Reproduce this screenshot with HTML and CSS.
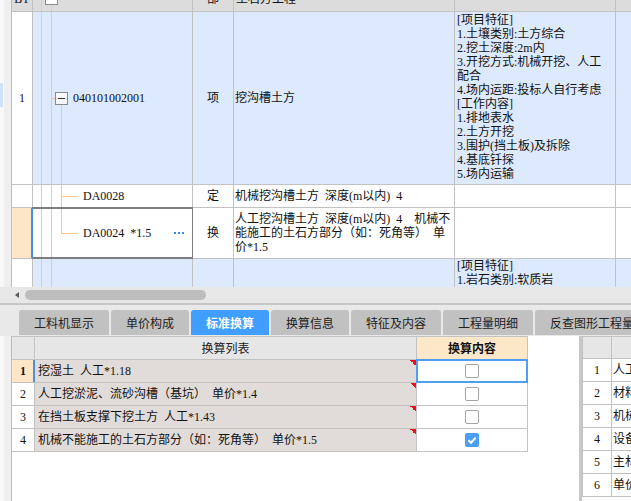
FILE: index.html
```html
<!DOCTYPE html>
<html lang="zh-CN">
<head>
<meta charset="utf-8">
<title>标准换算</title>
<link rel="stylesheet" href="styles.css">
</head>
<body>
<div class="app">
  <section class="upper">
    <div class="strip"><div class="strip-mark"></div></div>
    <div class="bill">
      <div class="c hd hd-c"><span class="cut">BT</span></div>
      <div class="c hd tree"><span class="hd-check"></span></div>
      <div class="c hd hd-c"><span class="cut">部</span></div>
      <div class="c hd hd-name"><span class="cut">土石方工程</span></div>
      <div class="c hd"></div>
      <div class="c hd"></div>

      <div class="c num">1</div>
      <div class="c tree blue t-root"><span class="fold"></span><span>040101002001</span></div>
      <div class="c blue center">项</div>
      <div class="c blue name">挖沟槽土方</div>
      <div class="c blue feat">
        <div>[项目特征]</div>
        <div>1.土壤类别:土方综合</div>
        <div>2.挖土深度:2m内</div>
        <div>3.开挖方式:机械开挖、人工</div>
        <div>配合</div>
        <div>4.场内运距:投标人自行考虑</div>
        <div>[工作内容]</div>
        <div>1.排地表水</div>
        <div>2.土方开挖</div>
        <div>3.围护(挡土板)及拆除</div>
        <div>4.基底钎探</div>
        <div>5.场内运输</div>
      </div>
      <div class="c blue"></div>

      <div class="c num"></div>
      <div class="c tree t-mid"><span>DA0028</span></div>
      <div class="c center">定</div>
      <div class="c name"><div>机械挖沟槽土方 深度(m以内) 4</div></div>
      <div class="c"></div>
      <div class="c"></div>

      <div class="c num cur"></div>
      <div class="c tree t-last sel"><span>DA0024 *1.5</span><span class="more"></span></div>
      <div class="c center">换</div>
      <div class="c name"><div>人工挖沟槽土方 深度(m以内) 4&nbsp; 机械不<br>能施工的土石方部分（如：死角等） 单<br>价*1.5</div></div>
      <div class="c"></div>
      <div class="c"></div>

      <div class="c num"></div>
      <div class="c tree blue"></div>
      <div class="c blue"></div>
      <div class="c blue"></div>
      <div class="c blue feat feat-top">
        <div>[项目特征]</div>
        <div>1.岩石类别:软质岩</div>
        <div>2.开凿深度:2m内</div>
      </div>
      <div class="c blue"></div>
    </div>
  </section>

  <div class="hscroll"><span class="arrow"></span><span class="thumb"></span></div>
  <div class="rule"></div>

  <nav class="tabs">
    <span class="tab">工料机显示</span>
    <span class="tab">单价构成</span>
    <span class="tab on">标准换算</span>
    <span class="tab">换算信息</span>
    <span class="tab">特征及内容</span>
    <span class="tab">工程量明细</span>
    <span class="tab">反查图形工程量</span>
  </nav>

  <section class="lower">
    <div class="strip"></div>
    <div class="calc-wrap">
      <div class="calc">
        <div class="k k-hd"></div>
        <div class="k k-hd">换算列表</div>
        <div class="k k-hd hot">换算内容</div>

        <div class="k k-num cur">1</div>
        <div class="k k-txt">挖湿土 人工*1.18</div>
        <div class="k k-chk sel"><span class="box"></span></div>

        <div class="k k-num">2</div>
        <div class="k k-txt">人工挖淤泥、流砂沟槽（基坑） 单价*1.4</div>
        <div class="k k-chk"><span class="box"></span></div>

        <div class="k k-num">3</div>
        <div class="k k-txt">在挡土板支撑下挖土方 人工*1.43</div>
        <div class="k k-chk"><span class="box"></span></div>

        <div class="k k-num">4</div>
        <div class="k k-txt">机械不能施工的土石方部分（如：死角等） 单价*1.5</div>
        <div class="k k-chk"><span class="box on"><svg width="12" height="12" viewBox="0 0 12 12"><path d="M2.4 6.2 5 8.7 9.7 3.6" fill="none" stroke="#fff" stroke-width="2"/></svg></span></div>
      </div>
    </div>
    <div class="vsplit"></div>
    <div class="side">
      <div class="side-grid">
        <div class="s s-hd"></div>
        <div class="s s-hd"></div>
        <div class="s s-num">1</div><div class="s s-txt">人工费</div>
        <div class="s s-num">2</div><div class="s s-txt">材料费</div>
        <div class="s s-num">3</div><div class="s s-txt">机械费</div>
        <div class="s s-num">4</div><div class="s s-txt">设备费</div>
        <div class="s s-num">5</div><div class="s s-txt">主材费</div>
        <div class="s s-num">6</div><div class="s s-txt">单价</div>
      </div>
    </div>
  </section>
</div>
</body>
</html>
```

FILE: styles.css
```css
* { box-sizing: border-box; margin: 0; padding: 0; }
html, body { width: 631px; height: 501px; overflow: hidden; background: #fff; }
body {
  font: 12px/14px "Liberation Serif", "Noto Sans CJK SC", serif;
  color: #111;
  word-spacing: 3px;
}
.app { display: flex; flex-direction: column; height: 501px; }

/* upper bill grid */
.upper { display: flex; height: 287px; flex: none; overflow: hidden; }
.strip {
  width: 12px; flex: none;
  border-right: 1px solid #bcbcbc;
  background: linear-gradient(90deg, #f8f8f8 0 4px, #efefef 4px);
}
.strip-mark { margin-top: 83px; width: 3px; height: 24px; background: #cfe2f8; }

.bill {
  flex: 1; min-width: 0;
  display: grid;
  grid-template-columns: 20px 159px 40px 220px 160px 1fr;
  grid-template-rows: 11px 172px 22px 50px 240px;
  gap: 1px;
  background: #c2c2c2;
  align-content: start;
}
.c {
  display: flex; align-items: center;
  background-color: #fff;
  overflow: hidden; min-width: 0;
  white-space: nowrap;
}
.hd { background-color: #dcdcdc; align-items: flex-start; }
.hd-c { justify-content: center; }
.hd-name { padding-left: 2px; }
.cut { display: block; margin-top: -8px; line-height: 14px; }
.hd-check {
  display: block; width: 13px; height: 13px;
  margin: -8px 0 0 12px;
  border: 1px solid #8c8c8c; background: #fff;
}
.center, .num { justify-content: center; }
.num.cur { background-color: #fde6c8; }
.blue { background-color: #dde9fc; }
.name { padding-left: 1px; }
.feat { display: block; padding: 1px 0 0 2px; }
.feat-top { padding-top: 0; }

.tree {
  background-image:
    linear-gradient(#f8c78a, #f8c78a),
    linear-gradient(#f8c78a, #f8c78a);
  background-repeat: no-repeat;
  background-size: 1px 100%, 1px 100%;
  background-position: 8px 0, 18px 0;
}
.t-root {
  padding-left: 22px;
  background-image:
    linear-gradient(#f8c78a, #f8c78a),
    linear-gradient(#f8c78a, #f8c78a),
    linear-gradient(#f8c78a, #f8c78a),
    linear-gradient(#f8c78a, #f8c78a);
  background-size: 1px 100%, 1px 100%, 1px calc(50% - 6px), 4px 1px;
  background-position: 8px 0, 18px 0, 28px 100%, 18px 50%;
}
.t-mid, .t-last {
  padding-left: 50px;
  background-image:
    linear-gradient(#f8c78a, #f8c78a),
    linear-gradient(#f8c78a, #f8c78a),
    linear-gradient(#f8c78a, #f8c78a),
    linear-gradient(#f8c78a, #f8c78a);
  background-size: 1px 100%, 1px 100%, 1px 100%, 17px 1px;
  background-position: 8px 0, 18px 0, 28px 0, 28px 50%;
}
.t-last { background-size: 1px 100%, 1px 100%, 1px 50%, 17px 1px; }
.sel {
  box-shadow: -2px 0 0 #3c8ef0, 0 0 0 1px #7d7d7d,
              inset 0 1px 0 #7d7d7d, inset 0 -1px 0 #7d7d7d;
}
.fold {
  flex: none; display: flex; align-items: center; justify-content: center;
  width: 13px; height: 13px; margin-right: 5px;
  border: 1px solid #8a8a8a; background: #f7f9fd;
}
.fold::before { content: ""; width: 7px; height: 1px; background: #333; }
.more {
  flex: none; margin-left: auto; margin-right: 8px;
  width: 10px; height: 2px;
  background: repeating-linear-gradient(90deg, #3b8de0 0 2px, transparent 2px 4px);
}

/* horizontal scrollbar */
.hscroll {
  flex: none; height: 16px; background: #e7e7e7;
  display: flex; align-items: center; padding-left: 15px;
}
.arrow {
  width: 0; height: 0;
  border-right: 4px solid #5a5a5a;
  border-top: 3.5px solid transparent;
  border-bottom: 3.5px solid transparent;
}
.thumb { margin-left: 6px; width: 181px; height: 10px; border-radius: 5px; background: #bdbdbd; }
.rule { flex: none; height: 2px; background: #c6c6c6; }

/* tabs */
.tabs {
  flex: none; height: 31px;
  display: flex; gap: 2px;
  padding: 5px 0 1px 19px;
  background: #e9e9e9;
  overflow: hidden;
  font-family: "Noto Sans CJK SC", sans-serif;
  word-spacing: 0;
}
.tab {
  flex: none; display: flex; align-items: center;
  padding: 0 15px;
  background: #c1c1c1;
  border-radius: 3px 3px 0 0;
  color: #222;
  white-space: nowrap;
}
.tab.on { background: #409eff; color: #fff; font-weight: bold; }

/* lower panels */
.lower { flex: 1; min-height: 0; display: flex; overflow: hidden; }
.calc-wrap { flex: 1; min-width: 0; background: #fff; }
.calc {
  width: 516px;
  display: grid;
  grid-template-columns: 22px 381px 110px;
  grid-auto-rows: 22px;
  gap: 1px;
  background: #c2c2c2;
  border-top: 1px solid #c2c2c2;
  border-right: 1px solid #c2c2c2;
  border-bottom: 1px solid #c2c2c2;
}
.k {
  display: flex; align-items: center;
  background: #fff; overflow: hidden; white-space: nowrap;
}
.k-hd {
  background: #e6e6e6; justify-content: center;
  font-family: "Noto Sans CJK SC", sans-serif; color: #222;
}
.k-hd.hot { background: #fde7c9; font-weight: bold; color: #111; }
.k-num { justify-content: center; }
.k-num.cur {
  background: #fde6c8; font-weight: bold;
  box-shadow: 1px 0 0 #4a90e2, inset -1px 0 0 #4a90e2;
}
.k-txt {
  padding-left: 3px;
  background: linear-gradient(to bottom left, #e8121a 50%, transparent 50%) right top / 6px 6px no-repeat, #e1dcd9;
}
.k-chk { justify-content: center; }
.k-chk.sel { box-shadow: 0 0 0 1px #4d9ef5, inset 0 0 0 1px #4d9ef5; }
.box {
  display: flex; align-items: center; justify-content: center;
  width: 14px; height: 14px;
  border: 1px solid #a4a4a4; border-radius: 2px; background: #fff;
}
.box.on { background: #4a9ff5; border-color: #4a9ff5; }

.vsplit { flex: none; width: 3px; background: #c8c8c8; }
.side { flex: none; width: 49px; background: #fff; overflow: hidden; }
.side-grid {
  display: grid;
  grid-template-columns: 28px 1fr;
  grid-template-rows: 21px;
  grid-auto-rows: 22px;
  gap: 1px;
  background: #c2c2c2;
  border-left: 1px solid #c2c2c2;
  border-top: 1px solid #c2c2c2;
  border-bottom: 1px solid #c2c2c2;
}
.s { display: flex; align-items: center; background: #fff; overflow: hidden; white-space: nowrap; }
.s-hd { background: #e6e6e6; }
.s-num { justify-content: center; }
.s-txt { padding-left: 1px; }
```
